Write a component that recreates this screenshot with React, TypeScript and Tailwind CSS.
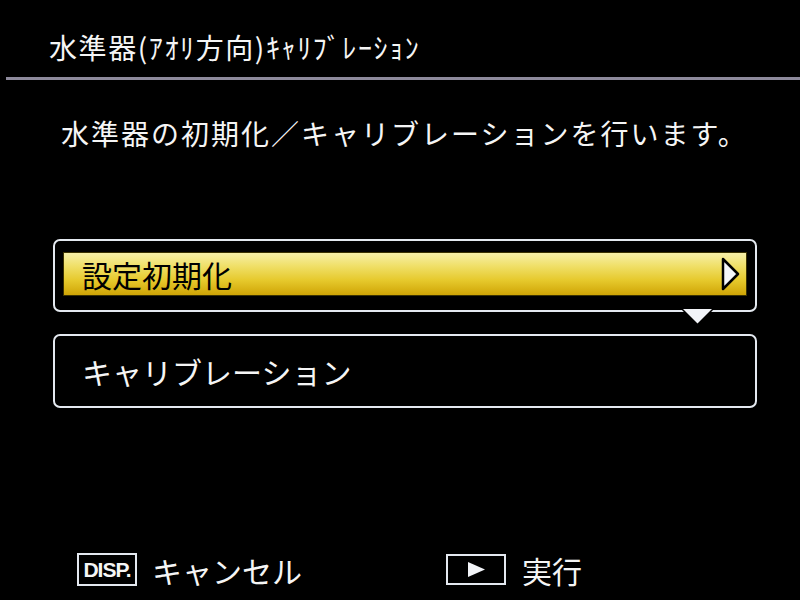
import React from "react";

const jp = { fontFamily: '"Noto Sans CJK JP", "Noto Sans", sans-serif' };

export default function App() {
  return (
    <div
      className="w-[800px] h-[600px] bg-black flex flex-col overflow-hidden text-[#f5f5f5]"
      style={jp}
    >
      {/* Title */}
      <div className="h-[77px] pt-[33px] pl-[49px] text-[28px] leading-none tracking-[1.6px] whitespace-nowrap">
        水準器(ｱｵﾘ方向)ｷｬﾘﾌﾞﾚｰｼｮﾝ
      </div>
      <div className="ml-[6px] h-[3px] bg-[#8e8a9c]" />

      {/* Instruction */}
      <div className="mt-[39px] pl-[61px] text-[28px] leading-none tracking-[2px] whitespace-nowrap">
        水準器の初期化／キャリブレーションを行います。
      </div>

      {/* Option 1 (selected) */}
      <div className="relative mt-[92px] ml-[53px] w-[704px] h-[73px] border-2 border-[#e4e9f0] rounded-[7px] pt-[11px] px-[8px]">
        <div className="h-[44px] border border-[#3b3200] bg-[linear-gradient(to_bottom,#f6efa8,#f0e06a_30%,#e6c92c_65%,#cfa406)] flex items-center justify-between pl-[18px] pr-[5px]">
          <span className="text-[30px] leading-none text-black">設定初期化</span>
          <svg width="21" height="34" viewBox="0 0 21 34">
            <polygon
              points="3,2 18,17 3,32"
              fill="#f4f6fa"
              stroke="#000"
              strokeWidth="2.5"
              strokeLinejoin="round"
            />
          </svg>
        </div>
        <svg
          className="absolute left-[625px] top-[67px]"
          width="35"
          height="18"
          viewBox="0 0 35 18"
        >
          <polygon points="0,0 35,0 17.5,18" fill="#000" />
          <polygon points="3,1 32,1 17.5,15.5" fill="#f2f4f8" />
        </svg>
      </div>

      {/* Option 2 */}
      <div className="mt-[22px] ml-[53px] w-[704px] h-[74px] border-2 border-[#e4e9f0] rounded-[7px] flex items-center pl-[27px]">
        <span className="text-[30px] leading-none">キャリブレーション</span>
      </div>

      {/* Bottom guide */}
      <div className="mt-[145px] h-[33px] flex items-center">
        <div className="w-[446px] pl-[77px] flex items-center">
          <div className="w-[60px] h-[33px] border-2 border-[#e4e9f0] flex items-center justify-center">
            <span
              className="text-[21px] font-bold leading-none tracking-[-1px]"
              style={{ fontFamily: '"Liberation Sans", Arial, sans-serif' }}
            >
              DISP.
            </span>
          </div>
          <span className="ml-[15px] text-[30px] leading-none">キャンセル</span>
        </div>
        <div className="w-[60px] h-[31px] border-2 border-[#e4e9f0] flex items-center justify-center">
          <svg width="17" height="15" viewBox="0 0 17 15">
            <polygon points="0,0 17,7.5 0,15" fill="#f2f4f8" />
          </svg>
        </div>
        <span className="ml-[16px] text-[30px] leading-none">実行</span>
      </div>
    </div>
  );
}
